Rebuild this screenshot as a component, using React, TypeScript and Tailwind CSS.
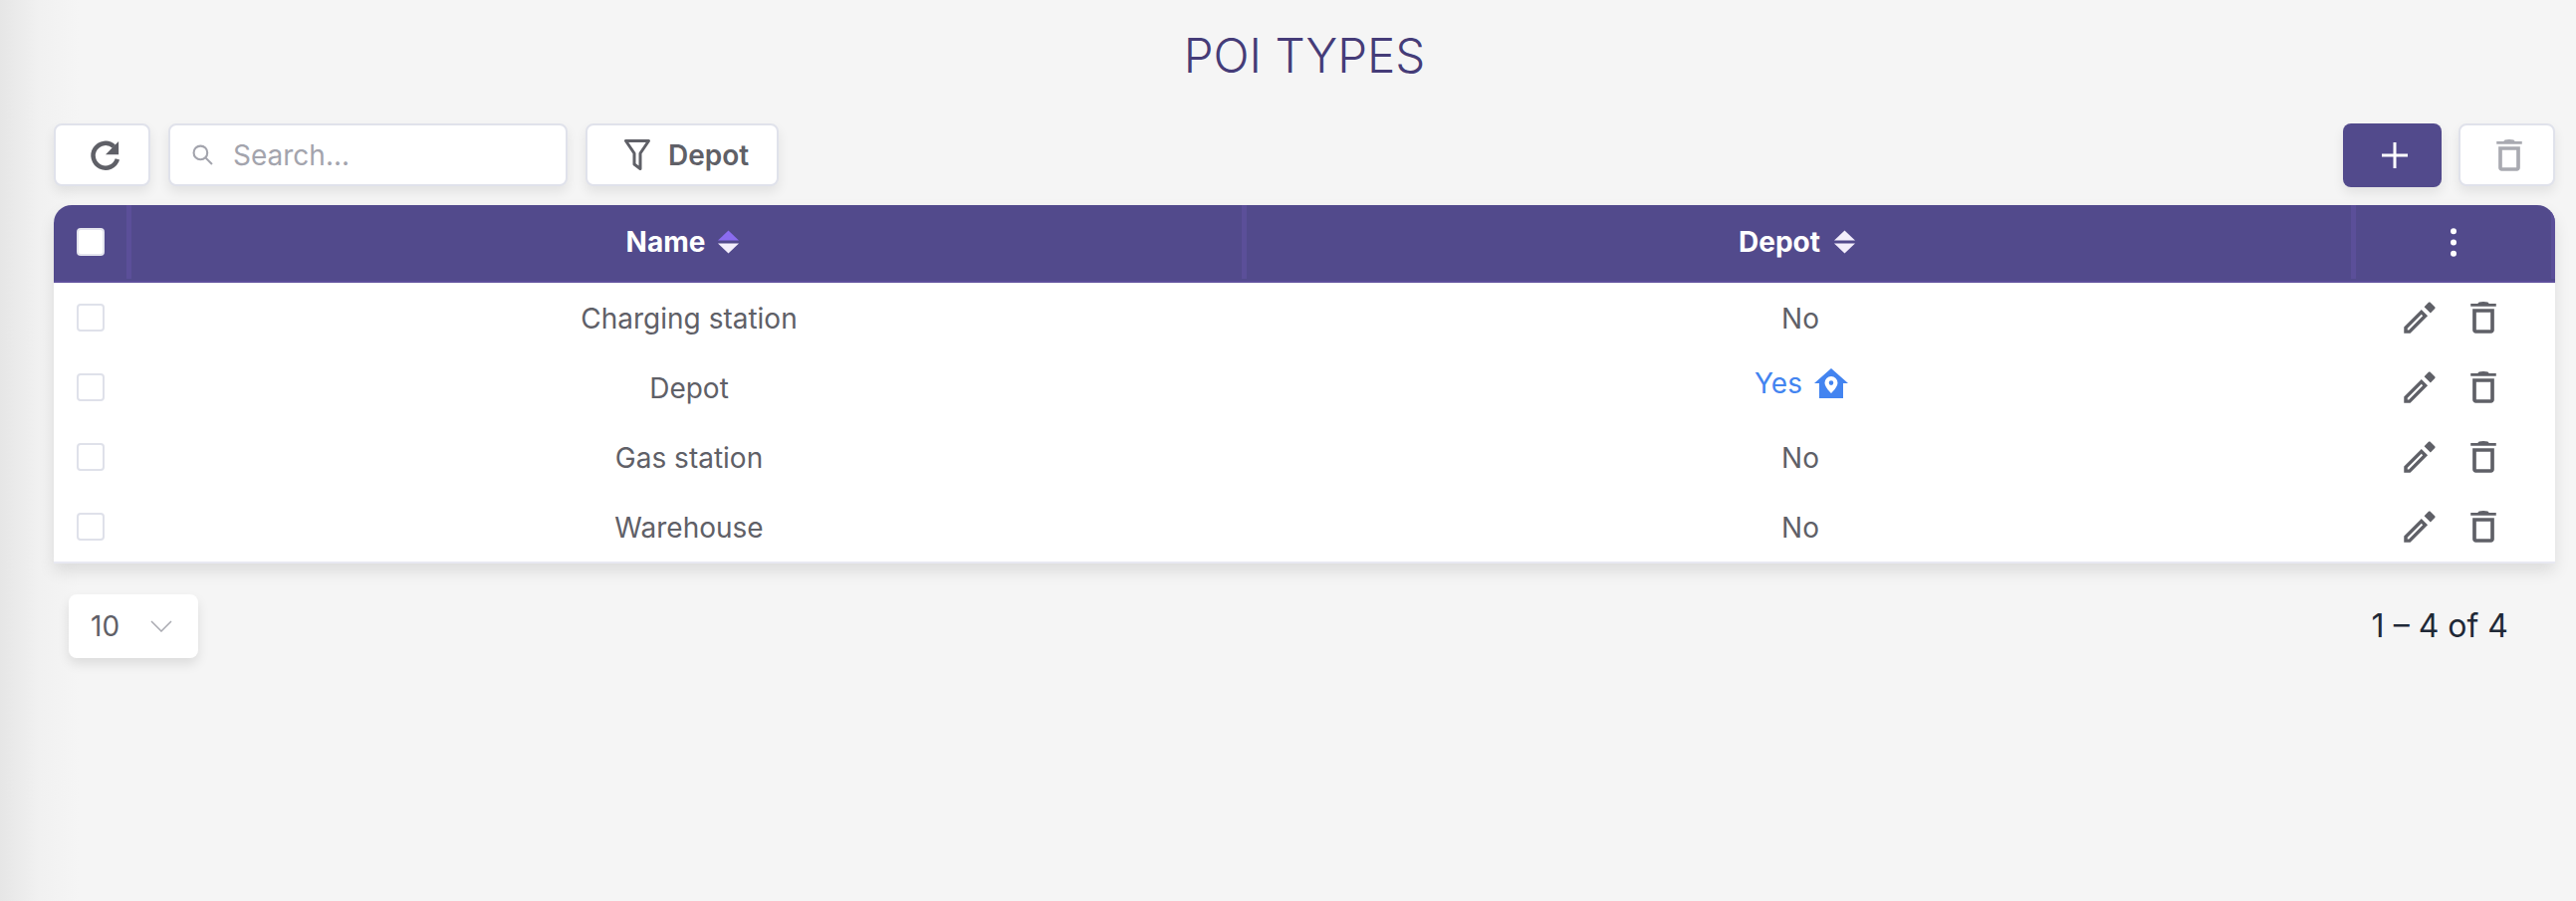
const font = "[font-family:Inter,'Liberation_Sans',sans-serif]"

const EditIcon = ({ className }: { className?: string }) => (
  <svg viewBox="0 0 24 24" fill="currentColor" className={className}>
    <path
      fillRule="evenodd"
      d="M3 17.400V21h3.600L16.600 11 13 7.400 3 17.400zM5 19.200v-1l8-8 .8.800-8 8.200H5z"
    />
    <path d="M14.600 5.800l2.500-2.500c.3-.3.700-.3 1 0l2.600 2.600c.3.300.3.700 0 1l-2.500 2.500z" />
  </svg>
)

const TrashIcon = ({ className }: { className?: string }) => (
  <svg viewBox="0 0 24 24" fill="currentColor" className={className}>
    <path d="M9.500 3.200c1.600-.4 3.400-.4 5 0l.8.800H19.300v1.500H4.700V4h4z" />
    <path
      fillRule="evenodd"
      d="M5.800 7h12.400v12.200c0 1-.8 1.800-1.800 1.800H7.600c-1 0-1.800-.8-1.800-1.800zM7.900 9v10h8.200V9z"
    />
  </svg>
)

const SortIcon = ({ top }: { top: string }) => (
  <svg viewBox="0 0 22 24" className="h-[24px] w-[21px]">
    <path d="M11 0l11 10.500H0z" fill={top} />
    <path d="M0 13.500h22L11 24z" fill="#f3eefc" />
  </svg>
)

const rows = [
  { name: 'Charging station', depot: false },
  { name: 'Depot', depot: true },
  { name: 'Gas station', depot: false },
  { name: 'Warehouse', depot: false },
]

const toolbarBox = 'flex h-[63px] items-center rounded-[8px] border-2 border-[#e0e2eb] bg-white shadow-[0_6px_12px_rgba(0,0,0,0.08)]'

const App = () => {
  return (
    <div className={`h-[905px] overflow-hidden bg-[#f5f5f5] bg-[linear-gradient(90deg,#e6e6e6_0px,#f1f1f1_40px,#f5f5f5_80px)] pl-[54px] pr-[21px] pt-[24px] text-[#5f6067] ${font}`}>
      <h1 className="h-[100px] text-center text-[47.5px] leading-[64px] font-light text-[#453c78]">POI TYPES</h1>

      <div className="flex h-[64px] items-start">
        <button className={`${toolbarBox} w-[97px] justify-center pl-[6px]`}>
          <svg viewBox="0 0 24 24" className="h-[42px] w-[42px]">
            <path d="M18.800 14.200a7.100 7.100 0 1 1-2-7.300" fill="none" stroke="currentColor" strokeWidth="2.600" />
            <path d="M19.500 4v7.500H12z" fill="currentColor" />
          </svg>
        </button>
        <div className={`${toolbarBox} ml-[18px] w-[401px] pl-[22px]`}>
          <svg viewBox="0 0 20 20" fill="none" stroke="#a3a4ad" strokeWidth="2" className="h-[21px] w-[21px]">
            <circle cx="8" cy="8" r="6.500" />
            <path d="M12.500 12.500L19 19" />
          </svg>
          <span className="ml-[20px] text-[28px] text-[#a3a4ad]">Search...</span>
        </div>
        <button className={`${toolbarBox} ml-[18px] w-[194px] pl-[37px]`}>
          <svg viewBox="0 0 26 31" fill="none" stroke="currentColor" strokeWidth="3" strokeLinejoin="round" className="h-[31px] w-[26px]">
            <path d="M1.500 1.500h23L16 14v15.500L10 25V14z" />
          </svg>
          <span className="ml-[18px] text-[28px] font-semibold">Depot</span>
        </button>

        <button className="ml-auto flex h-[64px] w-[99px] items-center justify-center rounded-[8px] bg-[#524a8c] pl-[5px] text-white shadow-[0_6px_12px_rgba(0,0,0,0.08)]">
          <svg viewBox="0 0 26 26" stroke="currentColor" strokeWidth="3" className="h-[26px] w-[26px]">
            <path d="M13 0v26M0 13h26" />
          </svg>
        </button>
        <button className={`${toolbarBox} ml-[17px] w-[97px] justify-center pl-[4px] text-[#a9aab1]`}>
          <TrashIcon className="h-[42px] w-[42px]" />
        </button>
      </div>

      <div className="mt-[18px] overflow-hidden rounded-t-[18px] border-b-2 border-[#e8e9f2] bg-white shadow-[0_8px_16px_rgba(0,0,0,0.1)]">
        <div className="grid h-[78px] grid-cols-[78px_1120px_1114px_1fr] border-b-2 border-[#5d4f9b] bg-[#524a8c] pb-[2px] text-[28px] font-bold text-white">
          <div className="flex items-center border-r-[5px] border-[#5b4f99] pl-[23px]">
            <span className="h-[28px] w-[28px] rounded-[4px] border-2 border-[#e4e5ee] bg-white" />
          </div>
          <div className="flex items-center justify-center gap-[13px] border-r-[5px] border-[#5b4f99] pr-[8px]">
            Name
            <SortIcon top="#8b6cf0" />
          </div>
          <div className="flex items-center justify-center gap-[14px] border-r-[5px] border-[#5b4f99] pr-[4px]">
            Depot
            <SortIcon top="#f3eefc" />
          </div>
          <div className="flex items-center justify-center border-r-[4px] border-[#5b4f99]">
            <svg viewBox="0 0 8 38" fill="currentColor" className="h-[29px] w-[6px]">
              <circle cx="4" cy="4" r="4" />
              <circle cx="4" cy="19" r="4" />
              <circle cx="4" cy="34" r="4" />
            </svg>
          </div>
        </div>

        {rows.map((row) => (
          <div key={row.name} className="grid h-[70px] grid-cols-[78px_1120px_1114px_1fr] items-center text-[28px]">
            <div className="flex items-center pl-[23px]">
              <span className="h-[28px] w-[28px] rounded-[4px] border-2 border-[#dfe1ea] bg-white" />
            </div>
            <div className="pt-[2px] text-center">{row.name}</div>
            {row.depot ? (
              <div className="flex -translate-y-[4px] items-center justify-center gap-[12px] text-[#4384f0]">
                Yes
                <svg viewBox="0 0 34 30" fill="currentColor" className="h-[30px] w-[34px]">
                  <path fillRule="evenodd" d="M17 0l17 15h-5v15H5V15H0zM17 8a6.500 6.500 0 0 0-6.500 6.500C10.500 19 17 25 17 25s6.500-6 6.500-10.500A6.500 6.500 0 0 0 17 8zm0 4.300a2.300 2.300 0 1 1 0 4.600 2.300 2.300 0 0 1 0-4.600z" />
                </svg>
              </div>
            ) : (
              <div className="pt-[2px] pr-[2px] text-center">No</div>
            )}
            <div className="flex items-center justify-center gap-[22px] pr-[8px]">
              <EditIcon className="h-[42px] w-[42px]" />
              <TrashIcon className="h-[42px] w-[42px]" />
            </div>
          </div>
        ))}
      </div>

      <div className="mt-[31px] flex items-center justify-between pl-[15px] pr-[47px]">
        <div className="flex h-[64px] w-[130px] items-center rounded-[8px] bg-white pl-[22px] text-[28px] shadow-[0_6px_12px_rgba(0,0,0,0.1)]">
          10
          <svg viewBox="0 0 22 12" fill="none" stroke="#a9aab1" strokeWidth="1.500" className="ml-[31px] h-[12px] w-[22px]">
            <path d="M1 1l10 10L21 1" />
          </svg>
        </div>
        <div className="text-[32px] text-[#1f2937]">1 – 4 of 4</div>
      </div>
    </div>
  )
}

export default App
